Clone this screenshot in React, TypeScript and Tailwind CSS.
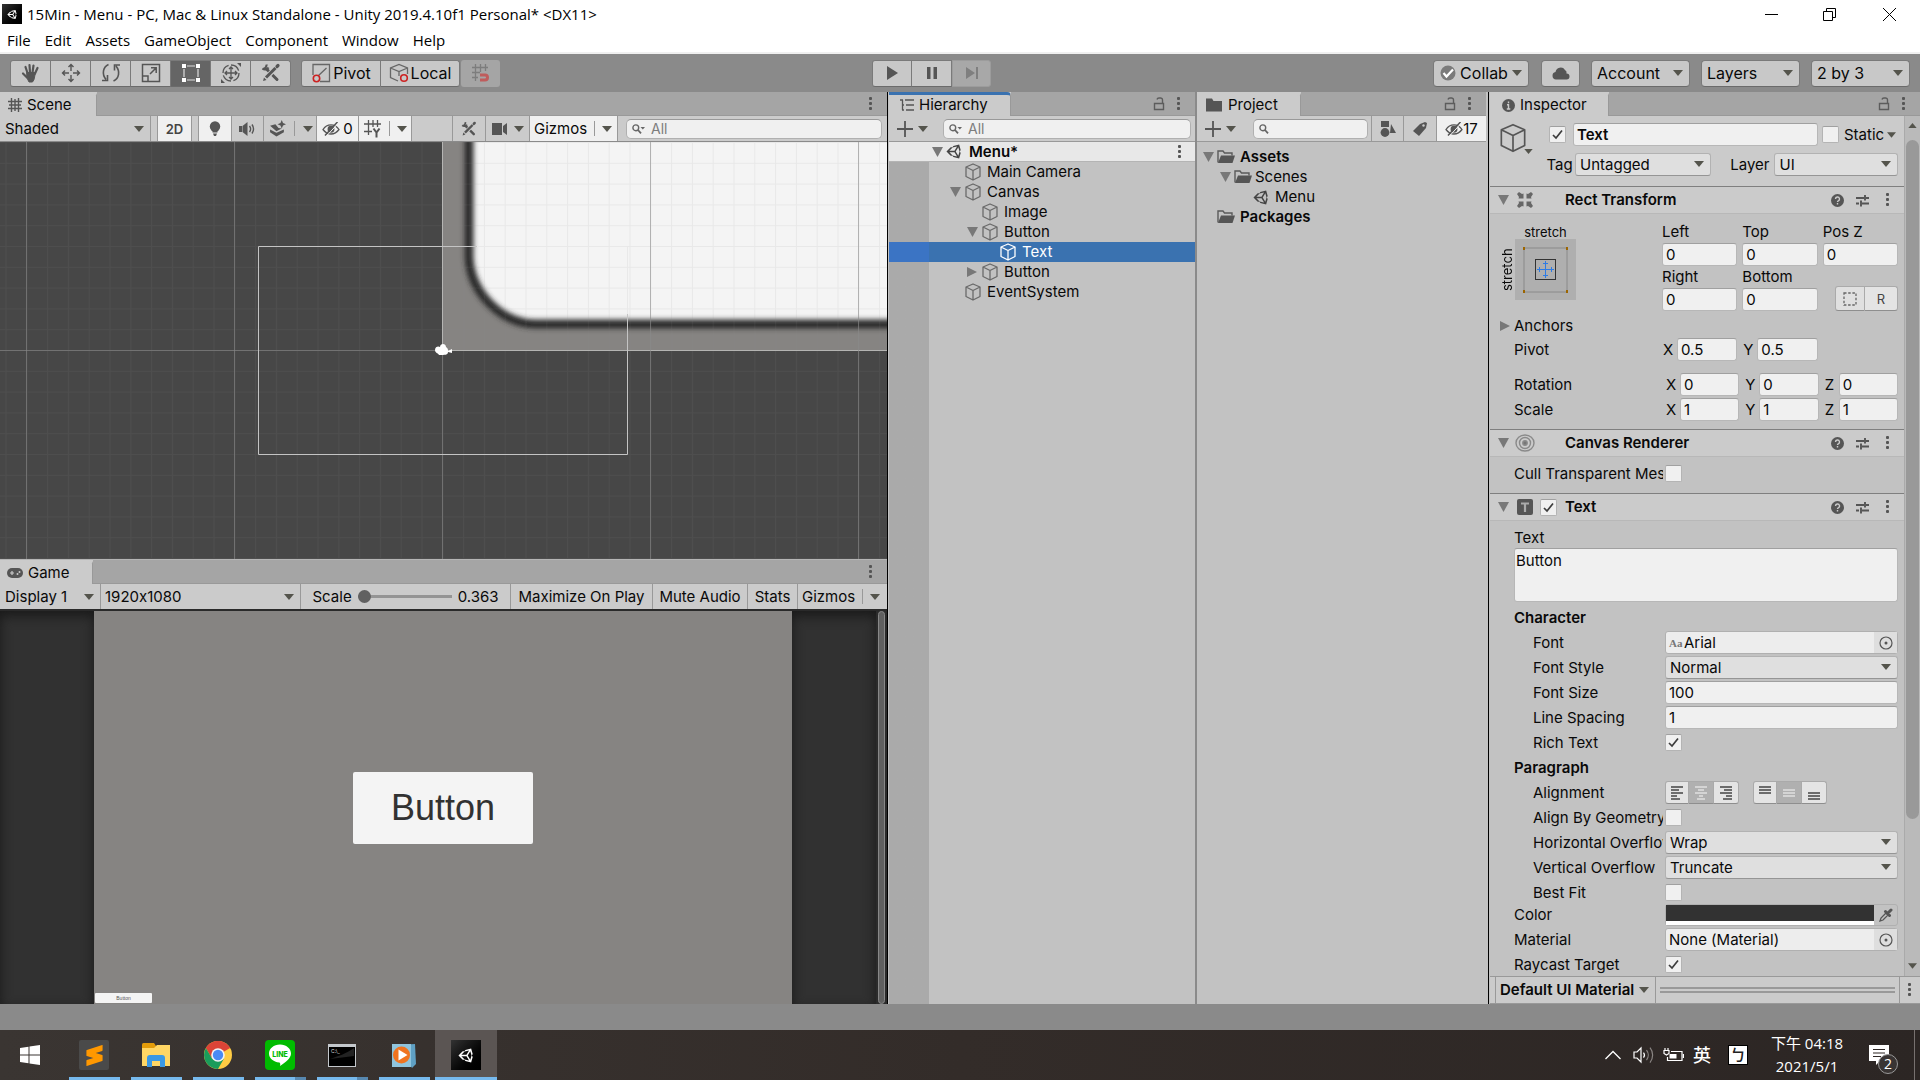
import type { ReactNode } from 'react'
import { FaUnity } from 'react-icons/fa'
import { SiSublimetext } from 'react-icons/si'

const menus = ['File', 'Edit', 'Assets', 'GameObject', 'Component', 'Window', 'Help']

/* ---------- icons ---------- */

function Caret({ className = 'w-[10px] h-[6px]' }: { className?: string }) {
  return (
    <svg className={`${className} shrink-0 text-[#54544c]`} viewBox="0 0 10 6" fill="currentColor">
      <path d="M0 0h10L5 6z" />
    </svg>
  )
}

function Kebab() {
  return (
    <svg className="w-[4px] h-[14px] shrink-0" viewBox="0 0 4 14" fill="#555">
      <rect x="0" y="0" width="3" height="3" rx="1" />
      <rect x="0" y="5" width="3" height="3" rx="1" />
      <rect x="0" y="10" width="3" height="3" rx="1" />
    </svg>
  )
}

function Lock() {
  return (
    <svg className="w-[12px] h-[14px]" viewBox="0 0 12 14" fill="none" stroke="#5c5c5c" strokeWidth="1.4">
      <path d="M1.5 6.5h9v6h-9zM9.5 6.5V3a2 2 0 0 0-2-2H6a2 2 0 0 0-2 1.500" />
    </svg>
  )
}

function Fold({ open = true }: { open?: boolean }) {
  return (
    <svg className="w-[12px] h-[12px] shrink-0" viewBox="0 0 12 12" fill="#787878">
      <path d={open ? 'M1 1h11L6.500 11z' : 'M1 1v10l10-5z'} />
    </svg>
  )
}

function Cube({ className = 'w-[18px] h-[18px] text-[#6a6a6a]' }: { className?: string }) {
  return (
    <svg className={`${className} shrink-0`} viewBox="0 0 18 18" fill="none" stroke="currentColor" strokeWidth="1.300" strokeLinejoin="round">
      <path d="M9 1l7 3v9.500L9 17l-7-3.500V4zM2 4l7 3.500L16 4M9 7.500V17" />
    </svg>
  )
}

function Folder({ open = true }: { open?: boolean }) {
  return (
    <svg className="w-[18px] h-[16px] shrink-0" viewBox="0 0 18 16">
      {open ? (
        <>
          <path d="M1 13.500V2h5l1.500 2H15v2.500" fill="none" stroke="#5a5a5a" strokeWidth="1.400" />
          <path d="M4 6.500h14L15.500 14H1z" fill="#555" />
        </>
      ) : (
        <path d="M1 1.500h6l1.500 2.500H17v10.500H1z" fill="#555" />
      )}
    </svg>
  )
}

function Tools({ size = 'size-[20px]', gap = '#c8c8c8' }: { size?: string; gap?: string }) {
  return (
    <svg className={size} viewBox="0 0 20 20" fill="none" stroke="#555">
      <path d="M6 6.500l10 10" strokeWidth="3" strokeLinecap="round" />
      <path d="M5.500 1.500a4 4 0 0 1-4 4.500M1.500 5.500a4 4 0 0 0 6-1" strokeWidth="2.200" />
      <path d="M16 3.500L4.500 15.500" stroke={gap} strokeWidth="5" />
      <path d="M14.500 5L5 14.500" strokeWidth="3" />
      <path d="M16 3.500l1-1" strokeWidth="3.200" strokeLinecap="round" />
      <path d="M2 18l1-3.500L5.500 17z" fill="#555" stroke="none" />
    </svg>
  )
}

function EyeOff() {
  return (
    <svg className="w-[18px] h-[14px] shrink-0" viewBox="0 0 18 14" fill="none" stroke="#555" strokeWidth="1.300">
      <path d="M1 7.500C3.500 3.500 6 2.800 9 2.800s5.500 1 8 4.700C14.500 11 12 12 9 12S3.500 11 1 7.500z" />
      <circle cx="9" cy="7.300" r="2.800" fill="#555" />
      <path d="M15.500 0L3 13.500" strokeWidth="1.600" />
      <path d="M16.500 1L4.500 14" stroke="#f0f0f0" strokeWidth="1" />
    </svg>
  )
}

function Magnifier({ caret = true }: { caret?: boolean }) {
  return (
    <svg className="w-[13px] h-[10px] shrink-0" viewBox="0 0 13 10" fill="none" stroke="#666" strokeWidth="1.400">
      <circle cx="3.800" cy="3.800" r="2.900" />
      <path d="M6 6l3 3.300" strokeWidth="1.800" />
      {caret && <path d="M8.500 3H13l-2.200 2.500z" fill="#666" stroke="none" />}
    </svg>
  )
}

function GridIcon() {
  return (
    <svg className="size-[14px]" viewBox="0 0 14 14" fill="none" stroke="#555" strokeWidth="1.400">
      <path d="M3.500 0v14M7 1v12M10.500 0v14M0 3.500h14M1 7h12M0 10.500h14" />
    </svg>
  )
}

function Target() {
  return (
    <svg className="size-[14px]" viewBox="0 0 14 14" fill="none" stroke="#555" strokeWidth="1.200">
      <circle cx="7" cy="7" r="6" />
      <circle cx="7" cy="7" r="1.500" fill="#555" stroke="none" />
    </svg>
  )
}

/* ---------- controls ---------- */

function Check({ id, label, checked = false }: { id: string; label?: string; checked?: boolean }) {
  return (
    <span className="grid size-[17px] shrink-0 place-items-center">
      <input
        id={id}
        type="checkbox"
        aria-label={label}
        defaultChecked={checked}
        className="peer col-start-1 row-start-1 size-[17px] appearance-none rounded-[2px] border border-[#b4b4b4] border-t-[#a0a0a0] bg-[#f0f0f0]"
      />
      <svg className="pointer-events-none invisible col-start-1 row-start-1 size-[11px] peer-checked:visible" viewBox="0 0 11 11" fill="none" stroke="#3c3c3c" strokeWidth="1.700">
        <path d="M1 6l3 3 6-7.500" />
      </svg>
    </span>
  )
}

function Select({ id, label, value, className = '' }: { id?: string; label?: string; value: string; className?: string }) {
  return (
    <span className={`relative flex h-[23px] min-w-0 ${className}`}>
      <select
        id={id}
        aria-label={label}
        className="h-full w-full appearance-none rounded-[3px] border border-[#b2b2b2] border-b-[#959595] bg-[#dfdfdf] pl-[4px] leading-[20px] text-[#090909]"
      >
        <option>{value}</option>
      </select>
      <span className="pointer-events-none absolute right-[7px] top-[8px] flex">
        <Caret />
      </span>
    </span>
  )
}

function Field({ id, label, value, className = 'w-full' }: { id?: string; label?: string; value: string; className?: string }) {
  return (
    <input
      id={id}
      aria-label={label}
      defaultValue={value}
      className={`${className} h-[23px] min-w-0 rounded-[3px] border border-[#b7b7b7] border-t-[#a0a0a0] bg-[#f0f0f0] px-[3px] text-[#090909]`}
    />
  )
}

function Search({ label, placeholder, caret = true, className }: { label: string; placeholder?: string; caret?: boolean; className: string }) {
  return (
    <label className={`flex h-[20px] min-w-0 items-center gap-[6px] rounded-[5px] border border-[#b0b0b0] border-t-[#999] bg-[#f0f0f0] pl-[5px] ${className}`}>
      <Magnifier caret={caret} />
      <input aria-label={label} placeholder={placeholder} className="w-full min-w-0 bg-transparent text-[14px] outline-none placeholder:text-[#7d7d7d]" />
    </label>
  )
}

function Tab({ icon, name, className, active = false }: { icon: ReactNode; name: string; className: string; active?: boolean }) {
  return (
    <button
      className={`flex h-[24px] items-center gap-[5px] rounded-tr-[4px] border-t-[3px] border-r border-r-[#999] bg-[#cbcbcb] pb-px leading-[20px] ${active ? 'border-t-[#3a72b0]' : 'border-t-[#cbcbcb]'} ${className}`}
    >
      {icon}
      {name}
    </button>
  )
}

function TabStrip({ children, lock = false }: { children: ReactNode; lock?: boolean }) {
  return (
    <div className="flex h-[24px] shrink-0 bg-[#cbcbcb]">
      {children}
      <div className="flex flex-1 items-center justify-end gap-[12px] border-b border-[#999] bg-[#a5a5a5] pr-[14px]">
        {lock && (
          <button aria-label="Lock">
            <Lock />
          </button>
        )}
        <button aria-label="Tab options">
          <Kebab />
        </button>
      </div>
    </div>
  )
}

/* ---------- top toolbar ---------- */

const toolButton = 'flex h-[27px] shrink-0 items-center border border-[#7a7a7a] border-b-[#6b6b6b]'

const tools: { name: string; icon: ReactNode; active?: boolean }[] = [
  {
    name: 'Hand tool',
    icon: (
      <svg className="size-[20px]" viewBox="0 0 20 20" fill="#555" stroke="#555" strokeLinecap="round" strokeWidth="2.200">
        <path d="M6.500 10L4.500 4M9 9.500L8.500 2M11.500 9.500L12.500 2.500M14 10.500L16.500 5M6 14.500L2 10.500" />
        <path d="M6 9.500h8.500l-1.500 7-1.500 2.500H8L6 15z" strokeWidth="1" />
      </svg>
    ),
  },
  {
    name: 'Move tool',
    icon: (
      <svg className="size-[20px]" viewBox="0 0 20 20" fill="none" stroke="#555" strokeWidth="1.400">
        <path d="M10 8V1.500M10 12v6.500M8 10H1.500M12 10h6.500M7.500 4L10 1.500 12.500 4M7.500 16l2.500 2.500 2.500-2.500M4 7.500L1.500 10 4 12.500M16 7.500l2.500 2.500-2.500 2.500" />
      </svg>
    ),
  },
  {
    name: 'Rotate tool',
    icon: (
      <svg className="size-[20px]" viewBox="0 0 20 20" fill="none" stroke="#555" strokeWidth="1.600">
        <path d="M7.500 1.500C2 4 .5 11 5 16.500M12.500 18C18 15.500 19.500 8.500 15 3M6.500 12v5.500H1M13.500 7.500V2H19" />
      </svg>
    ),
  },
  {
    name: 'Scale tool',
    icon: (
      <svg className="size-[20px]" viewBox="0 0 20 20" fill="none" stroke="#555" strokeWidth="1.500">
        <path d="M1.500 1.500h17v17h-17zM1.500 13h5.500v5.500M9 11l6-6M10 4.800h5.200V10" />
      </svg>
    ),
  },
  {
    name: 'Rect tool',
    active: true,
    icon: (
      <svg className="size-[20px]" viewBox="0 0 20 20" fill="none" stroke="#ddd" strokeWidth="1.200">
        <path d="M6 3h8M6 17h8M3 6v8M17 6v8" />
        <path d="M1 1h4v4H1zM15 1h4v4h-4zM1 15h4v4H1zM15 15h4v4h-4z" fill="#fff" stroke="none" />
      </svg>
    ),
  },
  {
    name: 'Transform tool',
    icon: (
      <svg className="size-[20px]" viewBox="0 0 20 20" fill="none" stroke="#555" strokeWidth="1.300">
        <circle cx="10" cy="10" r="8" strokeDasharray="10 2.500" />
        <path d="M10 4v12M4 10h12M8 6l2-2 2 2M8 14l2 2 2-2M6 8l-2 2 2 2M14 8l2 2-2 2" />
        <path d="M16 0h4v4zM0 16v4h4z" fill="#555" stroke="none" />
      </svg>
    ),
  },
  { name: 'Custom tools', icon: <Tools /> },
]

function TopToolbar() {
  return (
    <div className="flex h-[40px] shrink-0 items-center border-t-2 border-[#f0f0f0] bg-[#8a8a8a] px-[10px] text-[16px]">
      <div className="flex min-w-0 flex-[862] items-center">
        {tools.map((t, i) => (
          <button
            key={t.name}
            aria-label={t.name}
            className={`${toolButton} w-[41px] justify-center ${i > 0 ? '-ml-px' : 'rounded-l-[3px]'} ${t.active ? 'bg-[#656565]' : 'bg-[#c8c8c8]'} ${i === 6 ? 'rounded-r-[3px]' : ''}`}
          >
            {t.icon}
          </button>
        ))}
        <button className={`${toolButton} ml-[10px] w-[80px] justify-center gap-[2px] rounded-l-[3px] bg-[#c8c8c8]`}>
          <svg className="size-[20px]" viewBox="0 0 20 20" fill="none" stroke="#666" strokeWidth="1.300">
            <path d="M2 12V1.500h16.500v17H9M7 13L15.500 5" />
            <circle cx="5.500" cy="15.500" r="3.200" stroke="#c22" strokeWidth="1.600" />
          </svg>
          Pivot
        </button>
        <button className={`${toolButton} -ml-px w-[80px] justify-center gap-[2px] rounded-r-[3px] bg-[#c8c8c8]`}>
          <svg className="size-[20px]" viewBox="0 0 20 20" fill="none" stroke="#666" strokeWidth="1.300">
            <path d="M9 18l-7.500-3.500V5L10 1.500 18.500 5v6M1.500 5L10 8.500 18.500 5M10 8.500V13" />
            <circle cx="15" cy="15" r="3.300" stroke="#c22" strokeWidth="1.600" />
          </svg>
          Local
        </button>
        <button aria-label="Grid snapping" disabled className="ml-px flex h-[27px] w-[39px] items-center justify-center rounded-[3px] bg-[#a5a5a5]">
          <svg className="size-[20px]" viewBox="0 0 20 20" fill="none" stroke="#7d7d7d" strokeWidth="1.300">
            <path d="M4.500 1v17M9.500 1v8M14.500 1v7M1 4.500h16M1 9.500h8M1 14.500h6" />
            <path d="M9 12h5a2.500 2.500 0 0 1 0 5H9" stroke="#bf5c5c" strokeWidth="3" />
          </svg>
        </button>
      </div>

      <div className="flex items-center">
        <button aria-label="Play" className={`${toolButton} w-[40px] justify-center rounded-l-[3px] bg-[#c8c8c8]`}>
          <svg className="size-[14px]" viewBox="0 0 14 14" fill="#555">
            <path d="M2 0l11 7-11 7z" />
          </svg>
        </button>
        <button aria-label="Pause" className={`${toolButton} -ml-px w-[41px] justify-center bg-[#c8c8c8]`}>
          <svg className="size-[14px]" viewBox="0 0 14 14" fill="#555">
            <path d="M2 1h3.500v12H2zM8.500 1H12v12H8.500z" />
          </svg>
        </button>
        <button aria-label="Step" disabled className="flex h-[27px] w-[39px] items-center justify-center rounded-r-[3px] border border-[#9c9c9c] bg-[#a8a8a8]">
          <svg className="size-[14px]" viewBox="0 0 14 14" fill="#7f7f7f">
            <path d="M1 1l9 6-9 6zM11 1h2v12h-2z" />
          </svg>
        </button>
      </div>

      <div className="flex min-w-0 flex-[919] items-center justify-end">
        <button className={`${toolButton} mr-[12px] w-[96px] justify-center gap-[4px] rounded-[4px] bg-[#c8c8c8]`}>
          <svg className="size-[16px]" viewBox="0 0 16 16">
            <circle cx="8" cy="8" r="7.500" fill="#7b7b7b" />
            <path d="M3.500 8l3 3.500L13 4.500" fill="none" stroke="#fff" strokeWidth="2.200" />
          </svg>
          Collab
          <Caret />
        </button>
        <button aria-label="Services" className={`${toolButton} mr-[11px] w-[39px] justify-center rounded-[4px] bg-[#c8c8c8]`}>
          <svg className="w-[18px] h-[14px]" viewBox="0 0 18 14" fill="#555">
            <path d="M4 13.500a3.800 3.800 0 0 1-.5-7.500 5.200 5.200 0 0 1 9.500-2 3 3 0 0 1 1.500 3.500 3 3 0 0 1 0 6z" />
          </svg>
        </button>
        {['Account', 'Layers', '2 by 3'].map((name) => (
          <button key={name} className={`${toolButton} mr-[11px] w-[99px] justify-between rounded-[4px] bg-[#c8c8c8] pl-[5px] pr-[6px] last:mr-0`}>
            {name}
            <Caret />
          </button>
        ))}
      </div>
    </div>
  )
}

/* ---------- scene ---------- */

const cell = 'flex h-full items-center border-r border-[#999]'

function SceneToolbar() {
  return (
    <div className="flex h-[26px] shrink-0 items-center border-b border-[#8a8a8a] bg-[#cbcbcb]">
      <button className={`${cell} w-[151px] justify-between pl-[5px] pr-[6px]`}>
        Shaded
        <Caret />
      </button>
      <button className={`${cell} ml-[6px] w-[35px] justify-center border-l bg-[#f0f0f0] text-[13px] font-semibold text-[#444]`}>2D</button>
      <button aria-label="Scene lighting" className={`${cell} ml-[6px] w-[34px] justify-center border-l bg-[#f0f0f0]`}>
        <svg className="size-[16px]" viewBox="0 0 16 16" fill="#555">
          <circle cx="8" cy="5.500" r="5.200" />
          <path d="M5.500 8h5v3.500h-5zM6 12.500h4L9 15H7z" />
        </svg>
      </button>
      <button aria-label="Scene audio" className={`${cell} w-[32px] pl-[7px]`}>
        <svg className="w-[16px] h-[14px]" viewBox="0 0 16 14" fill="none" stroke="#555" strokeWidth="1.400">
          <path d="M0 4h3v6H0zM3.500 4L8.500 0v14l-5-4z" fill="#555" stroke="none" />
          <path d="M10.500 4a5 5 0 0 1 0 6M13 2.500a8 8 0 0 1 0 9" />
        </svg>
      </button>
      <button aria-label="Scene effects" className={`${cell} w-[53px] gap-[8px] pl-[5px]`}>
        <svg className="size-[17px]" viewBox="0 0 16 16" fill="#555">
          <path d="M1 5.500L6 4l3 3.500 3 .5-5 2.500zM1 9l6 3 7-3v2.500l-7 4-6-4z" />
          <path d="M12 0l1.200 2.800L16 4l-2.800 1.200L12 8l-1.200-2.800L8 4l2.800-1.200z" />
        </svg>
        <span className="h-[15px] w-px bg-[#999]" />
        <Caret />
      </button>
      <button aria-label="Hidden objects" className={`${cell} w-[42px] justify-center gap-[3px] bg-[#f0f0f0]`}>
        <EyeOff />0
      </button>
      <button aria-label="Grid" className={`${cell} w-[53px] gap-[7px] bg-[#f0f0f0] pl-[5px]`}>
        <svg className="size-[18px]" viewBox="0 0 18 18" fill="none" stroke="#555" strokeWidth="1.300">
          <path d="M4.500 0v15M9 0v7M13.500 0v7M0 4h17M0 11.500h8" />
          <path d="M9.500 8.500l3 4 3-4M12.500 12v5.500" strokeWidth="2" />
        </svg>
        <span className="h-[15px] w-px bg-[#999]" />
        <Caret />
      </button>
      <span className="h-full flex-1 border-r border-[#999]" />
      <button aria-label="Component tools" className={`${cell} w-[33px] justify-center`}>
        <Tools size="size-[16px]" gap="#cbcbcb" />
      </button>
      <button aria-label="Scene camera" className={`${cell} w-[44px] gap-[6px] pl-[6px]`}>
        <svg className="w-[16px] h-[12px]" viewBox="0 0 16 12" fill="#555">
          <path d="M0 0h10v12H0zM11 3l4-3v12l-4-3z" />
        </svg>
        <Caret />
      </button>
      <button className={`${cell} w-[88px] gap-[7px] bg-[#f0f0f0] pl-[4px]`}>
        Gizmos
        <span className="h-[15px] w-px bg-[#999]" />
        <Caret />
      </button>
      <Search label="Search scene" placeholder="All" className="ml-[8px] mr-[5px] w-[256px]" />
    </div>
  )
}

function SceneCanvas() {
  return (
    <svg className="min-h-0 w-full flex-1 bg-[#474747]">
      <defs>
        <filter id="soft" x="-20%" y="-20%" width="140%" height="140%">
          <feGaussianBlur stdDeviation="2.600" />
        </filter>
        <pattern id="minor" x="5.500" y="0" width="20.800" height="20.800" patternUnits="userSpaceOnUse">
          <path d="M0 .5h20.800M.5 0v20.800" stroke="#888" strokeOpacity=".11" />
        </pattern>
      </defs>
      <rect x="442.500" y="-2" width="2000" height="210.500" fill="#868482" stroke="#b9b9b7" />
      <path d="M469-30V112C469 150 500 181 535 182H2400V-30z" fill="#f4f4f4" />
      <path d="M469-30V116C471 150 500 181 535 182H2400" fill="none" stroke="#2c2c2c" strokeWidth="9" filter="url(#soft)" />
      <rect width="100%" height="100%" fill="url(#minor)" />
      <path d="M26.500 0v418M234.500 0v418M442.500 208v210M650.500 0v418M858.500 0v418M0 208.500h442" stroke="#8a8a8a" strokeOpacity=".6" />
      <path d="M477 104.500H258.500v208h369V172" fill="none" stroke="#c4c4c4" />
      <path d="M477 104.500h150.500V172" fill="none" stroke="#e9e9e9" />
      <path d="M435 208c0-4 4-4 5-3 0-4 6-4 6 0 2 1 2 3 2 4l4-2v4l-4-1c0 3-3 3-9 3-1-2-4-2-4-5z" fill="#fff" />
    </svg>
  )
}

function ScenePanel() {
  return (
    <section className="flex min-h-0 flex-[468] flex-col">
      <TabStrip>
        <Tab icon={<GridIcon />} name="Scene" className="w-[97px] pl-[8px]" />
      </TabStrip>
      <SceneToolbar />
      <SceneCanvas />
    </section>
  )
}

/* ---------- game ---------- */

function GamePanel() {
  return (
    <section className="flex min-h-0 flex-[444] flex-col border-t border-[#b5b5b5]">
      <TabStrip>
        <Tab
          icon={
            <svg className="w-[16px] h-[10px]" viewBox="0 0 16 10">
              <rect width="16" height="10" rx="5" fill="#555" />
              <path d="M3 5h4M5 3v4" stroke="#cbcbcb" strokeWidth="1.200" />
              <circle cx="10.500" cy="6" r="1" fill="#cbcbcb" />
              <circle cx="12.500" cy="4" r="1" fill="#cbcbcb" />
            </svg>
          }
          name="Game"
          className="w-[93px] pl-[7px]"
        />
      </TabStrip>
      <div className="flex h-[27px] shrink-0 items-center border-b-2 border-[#2a2a2a] bg-[#cbcbcb]">
        <button className={`${cell} w-[101px] justify-between pl-[5px] pr-[6px]`}>
          Display 1
          <Caret />
        </button>
        <button className={`${cell} w-[200px] justify-between pl-[4px] pr-[6px]`}>
          1920x1080
          <Caret />
        </button>
        <label className={`${cell} w-[210px] justify-center gap-[6px]`}>
          Scale
          <input
            type="range"
            defaultValue={0}
            className="w-[94px] appearance-none bg-transparent [&::-webkit-slider-runnable-track]:h-[3px] [&::-webkit-slider-runnable-track]:bg-[#949494] [&::-webkit-slider-thumb]:-mt-[5px] [&::-webkit-slider-thumb]:size-[13px] [&::-webkit-slider-thumb]:appearance-none [&::-webkit-slider-thumb]:rounded-full [&::-webkit-slider-thumb]:bg-[#616161]"
          />
          0.363
        </label>
        <button className={`${cell} w-[142px] justify-center whitespace-nowrap`}>Maximize On Play</button>
        <button className={`${cell} w-[95px] justify-center whitespace-nowrap`}>Mute Audio</button>
        <button className={`${cell} w-[50px] justify-center`}>Stats</button>
        <button className="flex h-full flex-1 items-center gap-[7px] pl-[4px]">
          Gizmos
          <span className="h-[15px] w-px bg-[#999]" />
          <Caret />
        </button>
      </div>
      <div className="relative flex min-h-0 flex-1 bg-[#313131]">
        <div className="flex-[94] shadow-[inset_0_5px_12px_#1a1a1a]" />
        <div className="flex flex-[698] flex-col items-center justify-center bg-[#868482] text-[#323232]">
          <button className="h-[72px] w-[180px] rounded-[2px] bg-[#f4f4f4] font-['Liberation_Sans',sans-serif] text-[36px]">Button</button>
        </div>
        <div className="flex-[84] shadow-[inset_0_5px_12px_#1a1a1a]" />
        <div className="w-[11px] bg-[#2b2b2b] px-[2px]">
          <div className="h-full rounded-[4px] border border-[#888] bg-[#606060]" />
        </div>
        {/* the second button sits at the canvas origin */}
        <button className="absolute bottom-[1px] left-[95px] h-[10px] w-[57px] rounded-[1px] bg-[#f4f4f4] font-['Liberation_Sans',sans-serif] text-[5px] leading-[10px] text-[#555]">
          Button
        </button>
      </div>
    </section>
  )
}

/* ---------- hierarchy / project ---------- */

type Node = { name: string; pad: string; fold?: 'open' | 'closed'; selected?: boolean }

const nodes: Node[] = [
  { name: 'Main Camera', pad: 'pl-[18px]' },
  { name: 'Canvas', pad: 'pl-[18px]', fold: 'open' },
  { name: 'Image', pad: 'pl-[35px]' },
  { name: 'Button', pad: 'pl-[35px]', fold: 'open' },
  { name: 'Text', pad: 'pl-[53px]', selected: true },
  { name: 'Button', pad: 'pl-[35px]', fold: 'closed' },
  { name: 'EventSystem', pad: 'pl-[18px]' },
]

function FoldSlot({ fold }: { fold?: 'open' | 'closed' }) {
  return <span className="flex w-[18px] shrink-0 justify-center">{fold && <Fold open={fold === 'open'} />}</span>
}

function AddButton() {
  return (
    <button aria-label="Create" className="flex items-center gap-[5px]">
      <svg className="size-[16px]" viewBox="0 0 16 16" fill="none" stroke="#555" strokeWidth="1.800">
        <path d="M8 0v16M0 8h16" />
      </svg>
      <Caret />
    </button>
  )
}

function HierarchyPanel() {
  return (
    <section className="flex min-w-0 flex-col border-r-2 border-[#8a8a8a] bg-[#c2c2c2] pl-px">
      <TabStrip lock>
        <Tab
          active
          icon={
            <svg className="size-[14px]" viewBox="0 0 14 14" fill="none" stroke="#555" strokeWidth="1.300">
              <path d="M0 2h3M5 2h9M2 7h2M6 7h8M2 12h2M6 12h8M2.500 2v10" />
            </svg>
          }
          name="Hierarchy"
          className="w-[122px] pl-[11px]"
        />
      </TabStrip>
      <div className="flex h-[26px] shrink-0 items-center border-b border-[#999] bg-[#cbcbcb] pl-[8px] pr-[4px]">
        <AddButton />
        <Search label="Search hierarchy" placeholder="All" className="ml-[15px] flex-1" />
      </div>
      <div className="flex flex-1 flex-col bg-linear-to-r from-[#aaa] from-[40px] to-[#c2c2c2] to-[40px]">
        <div className="flex h-[20px] items-center border-b border-[#b4b4b4] bg-[#e8e8e8] pl-[39px] pr-[13px] font-semibold">
          <FoldSlot fold="open" />
          <FaUnity className="mr-[6px] size-[17px] text-[#444]" />
          <span className="flex-1">Menu*</span>
          <Kebab />
        </div>
        {nodes.map((n, i) => (
          <div
            key={i}
            className={`flex h-[20px] items-center pl-[39px] ${n.selected ? 'bg-linear-to-r from-[#3b74c4] from-[40px] to-[#3a72b0] to-[40px] text-white' : ''}`}
          >
            <div className={`flex items-center ${n.pad}`}>
              <FoldSlot fold={n.fold} />
              <Cube className={n.selected ? 'size-[18px] text-white' : 'size-[18px] text-[#6a6a6a]'} />
              <span className="ml-[5px]">{n.name}</span>
            </div>
          </div>
        ))}
      </div>
    </section>
  )
}

function ProjectPanel() {
  return (
    <section className="flex min-w-0 flex-col border-r border-black bg-[#c2c2c2] pr-[2px]">
      <TabStrip lock>
        <Tab icon={<Folder open={false} />} name="Project" className="w-[104px] pl-[8px]" />
      </TabStrip>
      <div className="flex h-[26px] shrink-0 items-center border-b border-[#999] bg-[#cbcbcb] pl-[8px]">
        <AddButton />
        <Search label="Search project" caret={false} className="ml-[17px] mr-[3px] flex-1" />
        <button aria-label="Filter by type" className={`${cell} w-[33px] justify-center border-l`}>
          <svg className="size-[16px]" viewBox="0 0 16 16" fill="#555">
            <path d="M1 0h8v6H1zM11 3l5 9h-6z" />
            <circle cx="5" cy="11.500" r="4.400" />
          </svg>
        </button>
        <button aria-label="Filter by label" className={`${cell} w-[33px] justify-center`}>
          <svg className="size-[14px]" viewBox="0 0 14 14" fill="#555">
            <path d="M7 2l5-2 2 1-1 5-7 8-6-5z" />
            <circle cx="10.500" cy="3.500" r="1.200" fill="#cbcbcb" />
          </svg>
        </button>
        <button aria-label="Hidden packages" className="flex h-full w-[49px] items-center justify-center bg-[#f0f0f0]">
          <EyeOff />
          17
        </button>
      </div>
      <div className="flex flex-col pt-[5px]">
        <div className="flex h-[20px] items-center pl-[2px] font-semibold">
          <FoldSlot fold="open" />
          <Folder />
          <span className="ml-[5px]">Assets</span>
        </div>
        <div className="flex h-[20px] items-center pl-[19px]">
          <FoldSlot fold="open" />
          <Folder />
          <span className="ml-[3px]">Scenes</span>
        </div>
        <div className="flex h-[20px] items-center pl-[56px]">
          <FaUnity className="size-[17px] text-[#444]" />
          <span className="ml-[5px]">Menu</span>
        </div>
        <div className="flex h-[20px] items-center pl-[2px] font-semibold">
          <FoldSlot />
          <Folder />
          <span className="ml-[5px]">Packages</span>
        </div>
      </div>
    </section>
  )
}

/* ---------- inspector ---------- */

function SectionHeader({ icon, title, toggle = false }: { icon: ReactNode; title: string; toggle?: boolean }) {
  return (
    <div className="flex h-[28px] shrink-0 items-center border-t border-b border-t-[#7f7f7f] border-b-[#b8b8b8] bg-[#cbcbcb] pl-[7px] pr-[14px]">
      <Fold />
      <span className="ml-[6px] flex w-[20px] justify-center">{icon}</span>
      <span className="ml-[5px] flex w-[25px]">{toggle && <Check id="text-enabled" label="Text enabled" checked />}</span>
      <span className="flex-1 font-semibold">{title}</span>
      <button aria-label={`${title} help`}>
        <svg className="size-[13px]" viewBox="0 0 13 13">
          <circle cx="6.500" cy="6.500" r="6.500" fill="#555" />
          <path d="M4.500 5a2 2 0 1 1 2.800 1.800c-.6.300-.8.600-.8 1.200M6.500 9v1.400" fill="none" stroke="#cbcbcb" strokeWidth="1.400" />
        </svg>
      </button>
      <button aria-label={`${title} presets`} className="ml-[12px]">
        <svg className="size-[13px]" viewBox="0 0 13 13" fill="none" stroke="#555" strokeWidth="1.600">
          <path d="M0 4h8M10 4h3M9 1v5.500M0 9.500h3M6 9.500h7M5 6.500v6" strokeWidth="1.900" />
        </svg>
      </button>
      <button aria-label={`${title} options`} className="ml-[17px]">
        <Kebab />
      </button>
    </div>
  )
}

function Row({ label, id, indent = false, children }: { label: string; id?: string; indent?: boolean; children?: ReactNode }) {
  return (
    <div className="flex h-[23px] items-center">
      <label htmlFor={id} className={`w-[149px] shrink-0 overflow-hidden whitespace-nowrap ${indent ? 'pl-[19px]' : ''}`}>
        {label}
      </label>
      <div className="ml-[2px] flex min-w-0 flex-1">{children}</div>
    </div>
  )
}

function Axes({ name, values, inset = false, className }: { name: string; values: [string, string][]; inset?: boolean; className: string }) {
  return (
    <div className={`flex h-[23px] items-center pl-[24px] pr-[6px] ${className}`}>
      <span className={`shrink-0 ${inset ? 'w-[152px]' : 'w-[149px]'}`}>{name}</span>
      <div className="grid flex-1 grid-cols-3 gap-x-[6px]">
        {values.map(([axis, value]) => (
          <label key={axis} className="flex items-center">
            <span className="w-[14px] shrink-0">{axis}</span>
            <Field value={value} />
          </label>
        ))}
      </div>
    </div>
  )
}

function Offset({ name }: { name: string }) {
  return (
    <label className="flex flex-col">
      <span className="h-[22px] leading-[22px]">{name}</span>
      <Field value="0" />
    </label>
  )
}

function ObjectField({ id, value, icon }: { id: string; value: string; icon?: ReactNode }) {
  return (
    <div className="flex h-[23px] min-w-0 flex-1 items-center rounded-[3px] border border-[#b0b0b0] bg-[#ededed] pl-[3px]">
      {icon}
      <input id={id} readOnly defaultValue={value} className="w-full min-w-0 flex-1 bg-transparent outline-none" />
      <button aria-label={`Pick ${value}`} className="flex h-full w-[23px] shrink-0 items-center justify-center bg-[#dedede]">
        <Target />
      </button>
    </div>
  )
}

// line widths of the alignment glyphs, drawn top to bottom
const alignX = [
  'M1 1h12M1 4h8M1 7h12M1 10h6M1 13h9',
  'M1 1h12M4 4h6M1 7h12M5 10h4M3 13h8',
  'M1 1h12M5 4h8M1 7h12M7 10h6M4 13h9',
]
const alignY = ['M1 1h12M1 4h12M1 7h12', 'M1 4h12M1 7h12M1 10h12', 'M1 7h12M1 10h12M1 13h12']

function AlignGroup({ name, paths }: { name: string; paths: string[] }) {
  return (
    <div role="group" aria-label={name} className="flex">
      {paths.map((d, i) => (
        <button
          key={d}
          aria-label={`${name} ${i + 1}`}
          className={`flex h-[23px] w-[25px] items-center justify-center border border-l-0 border-[#aaa] border-b-[#8e8e8e] first:w-[24px] first:rounded-l-[3px] first:border-l last:rounded-r-[3px] ${i === 1 ? 'bg-[#b0b0b0]' : 'bg-[#e4e4e4]'}`}
        >
          <svg className="size-[14px]" viewBox="0 0 14 14" fill="none" stroke={i === 1 ? '#e0e0e0' : '#444'} strokeWidth="1.700">
            <path d={d} />
          </svg>
        </button>
      ))}
    </div>
  )
}

function AnchorWidget() {
  return (
    <div className="grid w-[172px] shrink-0 grid-cols-[25px_61px] content-start pt-[8px] text-[13px]">
      <span className="col-start-2 h-[17px] text-center leading-[20px]">stretch</span>
      <span className="col-start-1 row-start-2 rotate-180 justify-self-end text-center leading-[16px] [writing-mode:vertical-rl]">stretch</span>
      <svg className="size-[61px] bg-[#afafaf]" viewBox="0 0 61 61" fill="none">
        <rect x="9" y="9" width="43" height="44" stroke="#8a8a8a" />
        <path d="M8 8h2v3H8zM51 8h2v3h-2zM8 51h2v3H8zM51 51h2v3h-2z" fill="#9c6500" />
        <rect x="20.500" y="20.500" width="20" height="20" stroke="#333" />
        <path d="M30.500 22v17M22 30.500h17M28 24.500h5M28 36.500h5M24.500 28v5M36.500 28v5" stroke="#2d7be5" />
      </svg>
    </div>
  )
}

function RectTransform() {
  return (
    <div className="h-[215px] shrink-0">
      <div className="flex pr-[6px]">
        <AnchorWidget />
        <div className="grid min-w-0 flex-1 grid-cols-3 gap-x-[5px] pt-[7px]">
          <Offset name="Left" />
          <Offset name="Top" />
          <Offset name="Pos Z" />
          <Offset name="Right" />
          <Offset name="Bottom" />
          <div className="flex items-end justify-end">
            <button aria-label="Blueprint mode" className="flex h-[25px] w-[30px] items-center justify-center rounded-l-[3px] border border-[#aaa] border-b-[#8e8e8e] bg-[#e0e0e0]">
              <svg className="size-[14px]" viewBox="0 0 14 14" fill="none" stroke="#666" strokeWidth="1.300" strokeDasharray="2.500 1.700">
                <path d="M1 1h12v12H1z" />
              </svg>
            </button>
            <button className="h-[25px] w-[33px] rounded-r-[3px] border border-l-0 border-[#aaa] border-b-[#8e8e8e] bg-[#e4e4e4] text-[13px] text-[#444]">R</button>
          </div>
        </div>
      </div>
      <div className="mt-[3px] flex h-[23px] items-center pl-[9px]">
        <Fold open={false} />
        <span className="ml-[3px]">Anchors</span>
      </div>
      <Axes name="Pivot" values={[['X', '0.5'], ['Y', '0.5']]} className="mt-px" />
      <Axes inset name="Rotation" values={[['X', '0'], ['Y', '0'], ['Z', '0']]} className="mt-[12px]" />
      <Axes inset name="Scale" values={[['X', '1'], ['Y', '1'], ['Z', '1']]} className="mt-[2px]" />
    </div>
  )
}

function InspectorHeader() {
  return (
    <div className="flex h-[70px] shrink-0 bg-[#cbcbcb] pt-[7px]">
      <button aria-label="Object icon" className="flex w-[45px] shrink-0 items-start pl-[8px]">
        <Cube className="size-[30px] text-[#555] [&>path]:stroke-[1px]" />
        <Caret className="-ml-[4px] mt-[26px] w-[9px] h-[5px]" />
      </button>
      <div className="flex min-w-0 flex-1 flex-col gap-[7px] pl-[9px]">
        <div className="flex items-center">
          <span className="ml-[5px]">
            <Check id="active" label="Active" checked />
          </span>
          <Field label="Object name" value="Text" className="ml-[7px] flex-1 font-semibold" />
          <span className="ml-[4px]">
            <Check id="static" />
          </span>
          <label htmlFor="static" className="ml-[5px] w-[43px]">
            Static
          </label>
          <Caret className="mr-[8px] w-[9px] h-[6px]" />
        </div>
        <div className="flex items-center pr-[6px]">
          <label htmlFor="tag" className="w-[31px] text-center">
            Tag
          </label>
          <Select id="tag" value="Untagged" className="flex-[137]" />
          <label htmlFor="layer" className="w-[63px] pr-[5px] text-right">
            Layer
          </label>
          <Select id="layer" value="UI" className="flex-[124]" />
        </div>
      </div>
    </div>
  )
}

function InspectorPanel() {
  return (
    <section className="flex min-h-0 min-w-0 flex-col bg-[#c2c2c2] pl-px">
      <TabStrip lock>
        <Tab
          icon={
            <svg className="size-[13px]" viewBox="0 0 13 13">
              <circle cx="6.500" cy="6.500" r="6.500" fill="#555" />
              <path d="M6.500 2.500v1.700M5 5.800h1.500V10M4.800 10h3.500" stroke="#cbcbcb" strokeWidth="1.400" fill="none" />
            </svg>
          }
          name="Inspector"
          className="w-[119px] pl-[12px]"
        />
      </TabStrip>
      <div className="flex min-h-0 flex-1">
        <div className="flex min-w-0 flex-1 flex-col overflow-hidden">
          <InspectorHeader />
          <SectionHeader
            title="Rect Transform"
            icon={
              <svg className="size-[16px]" viewBox="0 0 16 16" fill="#666">
                <path d="M0 2l2-2 3 2 1.500-.5v5h-5L2 5zM16 2l-2-2-3 2-1.500-.5v5h5L14 5zM0 14l2 2 3-2 1.500.5v-5h-5L2 11zM16 14l-2 2-3-2-1.500.5v-5h5L14 11z" />
              </svg>
            }
          />
          <RectTransform />
          <SectionHeader
            title="Canvas Renderer"
            icon={
              <svg className="size-[20px]" viewBox="0 0 20 20" fill="none" stroke="#8a8a8a" strokeWidth="1.400">
                <ellipse cx="10" cy="10" rx="9" ry="8" />
                <circle cx="10" cy="10" r="5.500" />
                <circle cx="10" cy="10" r="2.200" fill="#777" />
              </svg>
            }
          />
          <div className="h-[36px] shrink-0 pl-[24px] pr-[6px] pt-[5px]">
            <Row label="Cull Transparent Mesh" id="cull">
              <Check id="cull" />
            </Row>
          </div>
          <SectionHeader
            title="Text"
            toggle
            icon={
              <svg className="size-[16px]" viewBox="0 0 16 16">
                <rect width="16" height="16" rx="2" fill="#555" />
                <path d="M4 4.500h8M8 4.500V13" stroke="#aaa" strokeWidth="2.200" />
              </svg>
            }
          />
          <div className="flex flex-col gap-[2px] pl-[24px] pr-[6px] pt-[5px]">
            <label htmlFor="text-value" className="h-[20px] leading-[23px]">
              Text
            </label>
            <textarea
              id="text-value"
              defaultValue="Button"
              className="mb-[2px] h-[54px] shrink-0 resize-none rounded-[3px] border border-[#b7b7b7] border-t-[#a0a0a0] bg-[#f0f0f0] px-[1px] pt-[2px] leading-[20px]"
            />
            <h3 className="h-[23px] font-semibold leading-[23px]">Character</h3>
            <Row label="Font" id="font" indent>
              <ObjectField id="font" value="Arial" icon={<span className="w-[15px] font-['Liberation_Serif',serif] text-[11px] font-bold text-[#777]">Aa</span>} />
            </Row>
            <Row label="Font Style" id="font-style" indent>
              <Select id="font-style" value="Normal" className="flex-1" />
            </Row>
            <Row label="Font Size" id="font-size" indent>
              <Field id="font-size" value="100" />
            </Row>
            <Row label="Line Spacing" id="line-spacing" indent>
              <Field id="line-spacing" value="1" />
            </Row>
            <Row label="Rich Text" id="rich" indent>
              <Check id="rich" checked />
            </Row>
            <h3 className="h-[23px] font-semibold leading-[23px]">Paragraph</h3>
            <Row label="Alignment" indent>
              <div className="flex gap-[14px]">
                <AlignGroup name="Horizontal" paths={alignX} />
                <AlignGroup name="Vertical" paths={alignY} />
              </div>
            </Row>
            <Row label="Align By Geometry" id="geometry" indent>
              <Check id="geometry" />
            </Row>
            <Row label="Horizontal Overflow" id="h-over" indent>
              <Select id="h-over" value="Wrap" className="flex-1" />
            </Row>
            <Row label="Vertical Overflow" id="v-over" indent>
              <Select id="v-over" value="Truncate" className="flex-1" />
            </Row>
            <Row label="Best Fit" id="best-fit" indent>
              <Check id="best-fit" />
            </Row>
          </div>
          <div className="-mt-px flex flex-col gap-[2px] pl-[24px] pr-[6px]">
            <Row label="Color" id="color">
              <div className="flex h-[22px] flex-1 rounded-[3px] border border-[#b0b0b0]">
                <button id="color" aria-label="Text color" className="h-full flex-1 border-b-4 border-white bg-[#323232]" />
                <button aria-label="Eyedropper" className="flex w-[23px] items-center justify-center">
                  <svg className="size-[14px]" viewBox="0 0 14 14" fill="none" stroke="#555">
                    <path d="M1 13l1-3 5-5 2 2-5 5z" strokeWidth="1.300" />
                    <path d="M6.500 3.500l4 4M9 5l3-3" strokeWidth="3" strokeLinecap="round" />
                  </svg>
                </button>
              </div>
            </Row>
            <Row label="Material" id="material">
              <ObjectField id="material" value="None (Material)" />
            </Row>
            <Row label="Raycast Target" id="raycast">
              <Check id="raycast" checked />
            </Row>
          </div>
        </div>
        <div className="flex w-[16px] shrink-0 flex-col items-center border-l border-[#aaa] bg-[#bababa] py-[7px]">
          <Caret className="w-[9px] h-[5px] rotate-180" />
          <div className="mt-[12px] w-[13px] flex-[680] rounded-full bg-[#999]" />
          <div className="flex-[144]" />
          <Caret className="w-[9px] h-[6px]" />
        </div>
      </div>
      <div className="flex h-[28px] shrink-0 items-center border-b border-t border-[#999] bg-[#cbcbcb] pl-[5px]">
        <button className="flex h-full items-center gap-[5px] border-l border-r border-[#999] pl-[4px] pr-[6px] font-semibold">
          Default UI Material
          <Caret />
        </button>
        <div className="mx-[4px] h-[6px] flex-1 border-y-2 border-[#999]" />
        <button aria-label="Preview options" className="flex h-full w-[21px] items-center justify-center border-l border-[#999]">
          <Kebab />
        </button>
      </div>
    </section>
  )
}

/* ---------- windows taskbar ---------- */

const apps: { name: string; icon: ReactNode; split?: boolean; active?: boolean }[] = [
  {
    name: 'Sublime Text',
    icon: (
      <span className="flex size-[30px] items-center justify-center rounded-[2px] bg-[#4a4a4a]">
        <SiSublimetext className="size-[21px] text-[#ff9800]" />
      </span>
    ),
  },
  {
    name: 'File Explorer',
    icon: (
      <svg className="w-[28px] h-[24px]" viewBox="0 0 28 24">
        <path d="M0 1.500Q0 0 1.500 0H12l2 3v4H0z" fill="#e39c0a" />
        <path d="M0 5h12l3-3h13v21H0z" fill="#ffd664" />
        <path d="M5 24v-9q0-3 3-3h12q3 0 3 3v9h-5v-6h-8v6z" fill="#3a98e4" />
      </svg>
    ),
  },
  {
    name: 'Chrome',
    icon: (
      <svg className="size-[28px]" viewBox="0 0 28 28">
        <circle cx="14" cy="14" r="14" fill="#fc4" />
        <path d="M14 14L1.900 7A14 14 0 0 1 26.100 7z" fill="#dc4437" />
        <path d="M14 7h12.100A14 14 0 0 0 1.900 7l6 10.500z" fill="#dc4437" />
        <path d="M1.900 7A14 14 0 0 0 14 28l6-10.500L14 14 8 17.500z" fill="#1a9c5b" />
        <circle cx="14" cy="14" r="6.800" fill="#f4f4f4" />
        <circle cx="14" cy="14" r="5.200" fill="#4a8af4" />
      </svg>
    ),
  },
  {
    name: 'LINE',
    split: true,
    icon: (
      <svg className="size-[30px]" viewBox="0 0 30 30">
        <rect width="30" height="30" rx="4" fill="#0b0" />
        <path d="M15 4.500c6.200 0 11 4 11 9 0 4.500-5 8.500-11 12.500.4-1.500.5-2.500-.5-3.500C8 22 4 18 4 13.500c0-5 4.800-9 11-9z" fill="#fff" />
        <text x="15" y="16.500" textAnchor="middle" fontSize="7" fontWeight="800" fill="#0b0">
          LINE
        </text>
      </svg>
    ),
  },
  {
    name: 'Command Prompt',
    split: true,
    icon: (
      <svg className="w-[28px] h-[23px]" viewBox="0 0 28 23">
        <rect x=".5" y=".5" width="27" height="22" fill="#000" stroke="#c4c8cc" />
        <path d="M1 2h26" stroke="#c4c8cc" strokeWidth="2" />
        <path d="M2 15C10 12 18 10 26 4v8z" fill="#222" />
        <text x="3" y="8.500" fontSize="5" fill="#ddd">
          C:\_
        </text>
      </svg>
    ),
  },
  {
    name: 'Media Player',
    icon: (
      <svg className="w-[26px] h-[25px]" viewBox="0 0 26 25">
        <path d="M6 2l18-1 1 20-4 4z" fill="#5fa0c4" />
        <path d="M1 1h19v23H1z" fill="#8fc4dd" />
        <circle cx="10.500" cy="12" r="8.500" fill="#f07420" />
        <path d="M7.500 6.500l9 5.500-9 5.500z" fill="#fff" />
      </svg>
    ),
  },
  {
    name: 'Unity',
    active: true,
    icon: (
      <span className="flex size-[30px] items-center justify-center bg-linear-to-br from-[#333] to-black">
        <FaUnity className="size-[17px] text-white" />
      </span>
    ),
  },
]

function Taskbar() {
  return (
    <footer className="flex h-[50px] shrink-0 items-stretch bg-linear-to-r from-[#3a3532] via-[#332c29] to-[#2c2624] text-white">
      <button aria-label="Start" className="flex w-[63px] items-center pl-[20px]">
        <svg className="size-[20px]" viewBox="0 0 20 20" fill="#fff">
          <path d="M0 3l8.500-1.200v7.700H0zM9.500 1.600L20 0v9.500H9.500zM0 10.500h8.500v7.700L0 17zM9.500 10.500H20V20L9.500 18.400z" />
        </svg>
      </button>
      {apps.map((a) => (
        <button key={a.name} aria-label={a.name} className={`flex w-[62px] flex-col items-center ${a.active ? 'bg-[#5b5553]' : ''}`}>
          <span className="flex flex-1 items-center pt-[3px]">{a.icon}</span>
          <span className={`flex h-[3px] bg-[#76b9ed] ${a.active ? 'w-full' : 'w-[51px]'}`}>
            {a.split && <span className="ml-auto w-[11px] bg-[#5788b0]" />}
          </span>
        </button>
      ))}
      <div className="ml-auto flex items-center font-['Open_Sans','Noto_Sans_CJK_TC',sans-serif] text-[15px]">
        <button aria-label="Show hidden icons">
          <svg className="w-[16px] h-[10px]" viewBox="0 0 16 10" fill="none" stroke="#fff" strokeWidth="1.300">
            <path d="M.5 9L8 1.500 15.500 9" />
          </svg>
        </button>
        <button aria-label="Volume" className="ml-[12px]">
          <svg className="w-[21px] h-[18px]" viewBox="0 0 21 18" fill="none" stroke="#fff" strokeWidth="1.200">
            <path d="M1 6h3l4-4v14l-4-4H1zM10.500 6.500a4 4 0 0 1 0 5" />
            <path d="M13.500 4a8 8 0 0 1 0 10M17 1.500a12 12 0 0 1 0 15" stroke="#8a8583" />
          </svg>
        </button>
        <button aria-label="Battery" className="ml-[9px]">
          <svg className="w-[21px] h-[14px]" viewBox="0 0 21 14" fill="none" stroke="#fff" strokeWidth="1.200">
            <path d="M8 3.500h11v9H4.500V9M1 2.500h5v3L3.500 7 1 5.500zM2 0v2.500M5 0v2.500M20.500 6v4" />
            <path d="M6.500 6h7v4.500h-7z" fill="#fff" stroke="none" />
          </svg>
        </button>
        <button className="ml-[9px] text-[18px] font-medium">英</button>
        <button className="ml-[17px] flex size-[20px] items-center justify-center border border-black bg-white text-[16px] font-medium text-[#222]">ㄅ</button>
        <button className="ml-[20px] flex w-[78px] flex-col items-center leading-[23px]">
          <span className="whitespace-nowrap">下午 04:18</span>
          <span>2021/5/1</span>
        </button>
        <button aria-label="Notifications" className="relative ml-[23px] mr-[25px]">
          <svg className="w-[20px] h-[20px]" viewBox="0 0 20 20" fill="#fff">
            <path d="M0 0h20v16h-9l-4 4v-4H0z" />
            <path d="M4 4.500h12M4 8h12M4 11.500h8" stroke="#2e2725" strokeWidth="1.200" />
          </svg>
          <span className="absolute left-[9px] top-[9px] flex size-[20px] items-center justify-center rounded-full border border-[#999] bg-[#393433] text-[14px]">2</span>
        </button>
        <span className="mr-[5px] h-[50px] w-px bg-[#77716f]" />
      </div>
    </footer>
  )
}

export default function App() {
  return (
    <div className="flex h-screen flex-col overflow-hidden bg-[#8a8a8a] font-['Inter','Noto_Sans_CJK_TC',sans-serif] text-[15px] leading-[20px] text-[#090909] [font-feature-settings:'calt'_0]">
      <header className="flex h-[52px] shrink-0 flex-col bg-white font-['Open_Sans',sans-serif] text-black">
        <div className="flex h-[28px] items-center pl-[2px]">
          <span className="flex size-[20px] items-center justify-center bg-linear-to-br from-[#333] to-black">
            <FaUnity className="size-[11px] text-white" />
          </span>
          <span className="ml-[5px] flex-1">15Min - Menu - PC, Mac &amp; Linux Standalone - Unity 2019.4.10f1 Personal* &lt;DX11&gt;</span>
          <div className="flex">
            <button aria-label="Minimize" className="flex w-[58px] justify-center">
              <svg className="size-[13px]" viewBox="0 0 13 13" stroke="#000">
                <path d="M0 6.500h13" />
              </svg>
            </button>
            <button aria-label="Restore" className="flex w-[58px] justify-center">
              <svg className="size-[13px]" viewBox="0 0 13 13" fill="none" stroke="#000">
                <path d="M.5 3.500h9v9h-9zM3.500 3.500v-3h9v9h-3" />
              </svg>
            </button>
            <button aria-label="Close" className="flex w-[62px] justify-center">
              <svg className="size-[13px]" viewBox="0 0 13 13" stroke="#000">
                <path d="M0 0l13 13M13 0L0 13" />
              </svg>
            </button>
          </div>
        </div>
        <nav className="flex h-[24px] items-center gap-[14px] pl-[7px]">
          {menus.map((m) => (
            <button key={m}>{m}</button>
          ))}
        </nav>
      </header>
      <TopToolbar />
      <main className="grid min-h-0 flex-1 grid-cols-[888fr_309fr_292fr_431fr] grid-rows-[minmax(0,1fr)]">
        <div className="flex min-h-0 min-w-0 flex-col border-r border-black">
          <ScenePanel />
          <GamePanel />
        </div>
        <HierarchyPanel />
        <ProjectPanel />
        <InspectorPanel />
      </main>
      <div className="h-[26px] shrink-0 bg-[#8a8a8a]" />
      <Taskbar />
    </div>
  )
}
